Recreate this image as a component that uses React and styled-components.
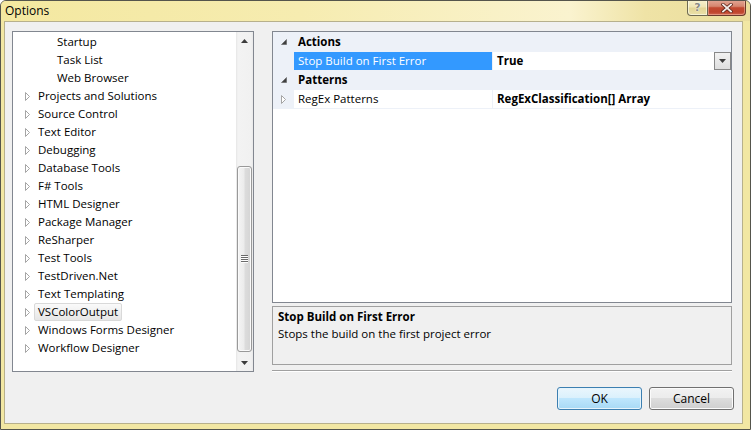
import React from "react";
import styled, { createGlobalStyle, css } from "styled-components";

const UI_FONT = `"Open Sans", "Noto Sans", "DejaVu Sans", sans-serif`;
const LINE = "#edf1f8";

const GlobalStyle = createGlobalStyle`
  html, body { margin: 0; padding: 0; background: #ffffff; }
  body { font-family: ${UI_FONT}; font-size: 11.5px; color: #000; overflow: hidden; }
  * { box-sizing: border-box; }
`;

const Window = styled.div`
  width: 751px;
  height: 430px;
  border: 1px solid #55554c;
  border-radius: 6px 6px 0 0;
  background: #f2e7a3;
  display: flex;
  flex-direction: column;
  overflow: hidden;
`;

const TitleBar = styled.div`
  height: 20px;
  flex: none;
  display: flex;
  justify-content: space-between;
  align-items: flex-start;
  padding-left: 4px;
  background: linear-gradient(90deg, #f4e8a0 0%, #f6ecb0 40%, #faf3cf 76%, #efe3a6 86%, #eadd9c 100%);
`;

const Title = styled.div`
  line-height: 20px;
  font-size: 12px;
  color: #000;
`;

const Captions = styled.div`
  display: flex;
  margin-top: -1px;
  margin-right: 4px;
`;

const CaptionButton = styled.div`
  height: 16px;
  display: flex;
  align-items: center;
  justify-content: center;
  border: 1px solid #6e6a52;
  border-top: none;
  ${(p) =>
    p.$close
      ? css`
          width: 38px;
          border-left: none;
          border-color: #6b3a2c;
          border-radius: 0 0 4px 0;
          background: linear-gradient(#e3a896 0%, #d6866f 42%, #c24a31 52%, #bf442c 80%, #cf6650 100%);
          box-shadow: inset 0 0 0 1px rgba(255, 210, 190, 0.45);
        `
      : css`
          width: 21px;
          border-radius: 0 0 0 4px;
          background: linear-gradient(#f7f1cf 0%, #efe5b4 45%, #e3d696 55%, #ebe0a8 100%);
          box-shadow: inset 0 0 0 1px rgba(255, 255, 240, 0.6);
        `}
`;

const HelpGlyph = styled.span`
  font-family: "DejaVu Sans", sans-serif;
  font-weight: bold;
  font-size: 11px;
  line-height: 1;
  color: #8a8a80;
  text-shadow: 0 0 1px #fff, 0 0 1px #fff;
`;

const Frame = styled.div`
  flex: 1;
  display: flex;
  padding: 0 7px 5px 3px;
`;

const Client = styled.div`
  flex: 1;
  border: 1px solid #b7b08c;
  background: #f0f0f0;
  display: flex;
  flex-direction: column;
  padding: 9px 0 0 7px;
`;

const Main = styled.div`
  display: flex;
  gap: 18px;
  padding-right: 10px;
`;

/* ---------- Tree ---------- */
const TreeBox = styled.div`
  width: 242px;
  height: 341px;
  border: 1px solid #828790;
  background: #fff;
  display: flex;
`;

const TreeList = styled.div`
  flex: 1;
  padding-top: 1px;
  display: flex;
  flex-direction: column;
`;

const TreeRow = styled.div`
  height: 18px;
  display: flex;
  align-items: stretch;
  padding-left: ${(p) => 12 + p.$level * 19}px;
`;

const ExpanderSlot = styled.div`
  width: 9px;
  display: flex;
  align-items: center;
`;

const TreeLabel = styled.div`
  display: flex;
  align-items: center;
  padding: 0 3px 1px;
  border: 1px solid transparent;
  border-radius: 2px;
  white-space: nowrap;
  ${(p) =>
    p.$selected &&
    css`
      border-color: #d9d9d9;
      background: linear-gradient(#fafafa, #e6e6e6);
    `}
`;

const Scrollbar = styled.div`
  width: 17px;
  display: flex;
  flex-direction: column;
  background: linear-gradient(90deg, #e6e6e6 0px, #f3f3f3 2px, #f1f1f1 15px, #e9e9e9 17px);
`;

const ArrowButton = styled.div`
  height: 17px;
  flex: none;
  display: flex;
  align-items: center;
  justify-content: center;
`;

const Track = styled.div`
  flex: 1;
  display: flex;
  flex-direction: column;
  align-items: center;
`;

const Thumb = styled.div`
  width: 15px;
  border: 1px solid #999;
  border-radius: 3px;
  background: linear-gradient(90deg, #f4f4f4 0%, #ececec 45%, #dcdcdc 55%, #d4d4d4 100%);
  box-shadow: inset 0 0 0 1px #fafafa;
  display: flex;
  align-items: center;
  justify-content: center;
`;

/* ---------- Property grid ---------- */
const RightColumn = styled.div`
  width: 460px;
  display: flex;
  flex-direction: column;
`;

const Grid = styled.div`
  height: 272px;
  border: 1px solid #828790;
  background: #fff;
  display: flex;
  flex-direction: column;
`;

const Row = styled.div`
  height: 19px;
  flex: none;
  display: grid;
  grid-template-columns: 21px 198px 1fr;
  border-bottom: 1px solid ${LINE};
  &:first-child {
    height: 20px;
  }
  ${(p) =>
    p.$category &&
    css`
      background: ${LINE};
      font-weight: bold;
    `}
`;

const MarginCell = styled.div`
  background: ${LINE};
  display: flex;
  align-items: center;
  justify-content: center;
`;

const NameCell = styled.div`
  display: flex;
  align-items: center;
  padding: 0 0 1px 4px;
  white-space: nowrap;
  ${(p) =>
    p.$span &&
    css`
      grid-column: 2 / 4;
    `}
  ${(p) =>
    p.$selected &&
    css`
      background: #3399ff;
      color: #fff;
    `}
`;

const ValueCell = styled.div`
  display: flex;
  align-items: center;
  justify-content: space-between;
  padding-left: 4px;
  border-left: 1px solid ${LINE};
  font-weight: bold;
  white-space: nowrap;
`;

const ValueText = styled.span`
  padding-bottom: 1px;
`;

const DropButton = styled.div`
  width: 17px;
  height: 18px;
  border: 1px solid #888;
  background: linear-gradient(#f2f2f2, #dedede);
  display: flex;
  align-items: center;
  justify-content: center;
`;

const Description = styled.div`
  margin-top: 3px;
  height: 59px;
  border: 1px solid #a0a0a0;
  padding: 1px 5px;
  line-height: 17px;
`;

const DescTitle = styled.div`
  font-weight: bold;
`;

const Separator = styled.div`
  margin-top: 5px;
  border-top: 1px solid #a0a0a0;
  border-bottom: 1px solid #ffffff;
`;

/* ---------- Buttons ---------- */
const ButtonRow = styled.div`
  display: flex;
  justify-content: flex-end;
  gap: 7px;
  margin-top: 15px;
  padding-right: 8px;
`;

const Button = styled.div`
  width: 85px;
  height: 23px;
  display: flex;
  align-items: center;
  justify-content: center;
  padding-bottom: 1px;
  border-radius: 3px;
  border: 1px solid #707070;
  box-shadow: inset 0 0 0 1px #fbfbfb;
  background: linear-gradient(#f2f2f2 0%, #ebebeb 50%, #dddddd 50%, #cfcfcf 100%);
  font-size: 12px;
  ${(p) =>
    p.$default &&
    css`
      border-color: #3c7fb1;
      box-shadow: inset 0 0 0 1px #e6f4fc;
      background: linear-gradient(#eaf6fd 0%, #d9f0fc 50%, #bee6fd 50%, #a7d9f5 100%);
    `}
`;

/* ---------- Icons ---------- */
const Collapsed = () => (
  <svg width="6" height="9" viewBox="0 0 6 9">
    <path d="M0.5 0.5 L4.5 4.5 L0.5 8.5 Z" fill="#fff" stroke="#a5a5a5" strokeWidth="1" />
  </svg>
);

const Expanded = () => (
  <svg width="6" height="6" viewBox="0 0 6 6">
    <path d="M5.5 0.5 L5.5 5.5 L0.5 5.5 Z" fill="#404040" stroke="#606060" strokeWidth="0.6" />
  </svg>
);

const UpArrow = () => (
  <svg width="7" height="4" viewBox="0 0 7 4">
    <path d="M0 4 L3.5 0 L7 4 Z" fill="#3c3c3c" />
  </svg>
);

const DownArrow = () => (
  <svg width="7" height="4" viewBox="0 0 7 4">
    <path d="M0 0 L7 0 L3.5 4 Z" fill="#3c3c3c" />
  </svg>
);

const Grip = () => (
  <svg width="7" height="8" viewBox="0 0 7 8">
    {[0, 2, 4, 6].map((y) => (
      <rect key={y} x="0" y={y} width="7" height="1" fill="#6a6a6a" />
    ))}
    {[1, 3, 5, 7].map((y) => (
      <rect key={y} x="0" y={y} width="7" height="1" fill="#fdfdfd" />
    ))}
  </svg>
);

const CloseGlyph = () => (
  <svg width="12" height="10" viewBox="0 0 12 10">
    <path d="M2 1.5 L10 8.5 M10 1.5 L2 8.5" stroke="#5e2418" strokeWidth="3.4" strokeLinecap="square" />
    <path d="M2 1.5 L10 8.5 M10 1.5 L2 8.5" stroke="#f4ece8" strokeWidth="1.8" strokeLinecap="square" />
  </svg>
);

const treeItems = [
  { label: "Startup", level: 1 },
  { label: "Task List", level: 1 },
  { label: "Web Browser", level: 1 },
  { label: "Projects and Solutions", level: 0, exp: true },
  { label: "Source Control", level: 0, exp: true },
  { label: "Text Editor", level: 0, exp: true },
  { label: "Debugging", level: 0, exp: true },
  { label: "Database Tools", level: 0, exp: true },
  { label: "F# Tools", level: 0, exp: true },
  { label: "HTML Designer", level: 0, exp: true },
  { label: "Package Manager", level: 0, exp: true },
  { label: "ReSharper", level: 0, exp: true },
  { label: "Test Tools", level: 0, exp: true },
  { label: "TestDriven.Net", level: 0, exp: true },
  { label: "Text Templating", level: 0, exp: true },
  { label: "VSColorOutput", level: 0, exp: true, selected: true },
  { label: "Windows Forms Designer", level: 0, exp: true },
  { label: "Workflow Designer", level: 0, exp: true },
];

export default function App() {
  return (
    <>
      <GlobalStyle />
      <Window>
        <TitleBar>
          <Title>Options</Title>
          <Captions>
            <CaptionButton>
              <HelpGlyph>?</HelpGlyph>
            </CaptionButton>
            <CaptionButton $close>
              <CloseGlyph />
            </CaptionButton>
          </Captions>
        </TitleBar>
        <Frame>
          <Client>
            <Main>
              <TreeBox>
                <TreeList>
                  {treeItems.map((it) => (
                    <TreeRow key={it.label} $level={it.level}>
                      <ExpanderSlot>{it.exp && <Collapsed />}</ExpanderSlot>
                      <TreeLabel $selected={it.selected}>{it.label}</TreeLabel>
                    </TreeRow>
                  ))}
                </TreeList>
                <Scrollbar>
                  <ArrowButton>
                    <UpArrow />
                  </ArrowButton>
                  <Track>
                    <Thumb style={{ marginTop: 117, height: 186 }}>
                      <Grip />
                    </Thumb>
                  </Track>
                  <ArrowButton>
                    <DownArrow />
                  </ArrowButton>
                </Scrollbar>
              </TreeBox>
              <RightColumn>
                <Grid>
                  <Row $category>
                    <MarginCell>
                      <Expanded />
                    </MarginCell>
                    <NameCell $span>Actions</NameCell>
                  </Row>
                  <Row>
                    <MarginCell />
                    <NameCell $selected>Stop Build on First Error</NameCell>
                    <ValueCell>
                      <ValueText>True</ValueText>
                      <DropButton>
                        <DownArrow />
                      </DropButton>
                    </ValueCell>
                  </Row>
                  <Row $category>
                    <MarginCell>
                      <Expanded />
                    </MarginCell>
                    <NameCell $span>Patterns</NameCell>
                  </Row>
                  <Row>
                    <MarginCell>
                      <Collapsed />
                    </MarginCell>
                    <NameCell>RegEx Patterns</NameCell>
                    <ValueCell>
                      <ValueText>RegExClassification[] Array</ValueText>
                    </ValueCell>
                  </Row>
                </Grid>
                <Description>
                  <DescTitle>Stop Build on First Error</DescTitle>
                  <div>Stops the build on the first project error</div>
                </Description>
                <Separator />
              </RightColumn>
            </Main>
            <ButtonRow>
              <Button $default>OK</Button>
              <Button>Cancel</Button>
            </ButtonRow>
          </Client>
        </Frame>
      </Window>
    </>
  );
}
